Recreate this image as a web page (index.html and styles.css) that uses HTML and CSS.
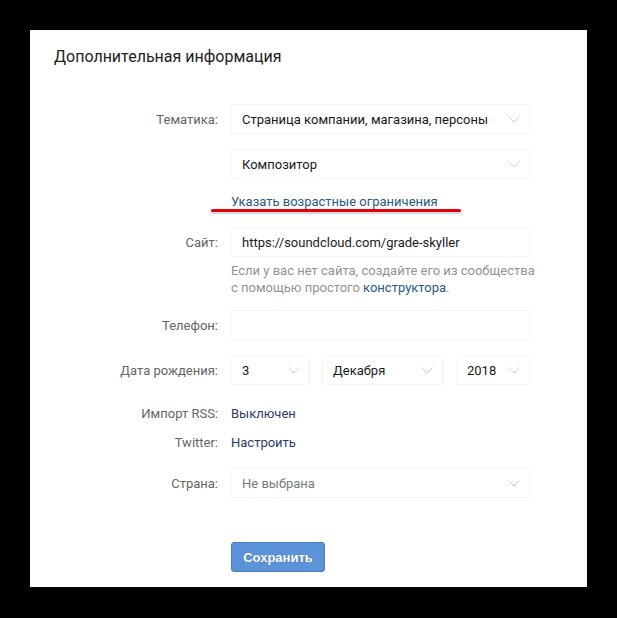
FILE: index.html
```html
<!DOCTYPE html>
<html lang="ru">
<head>
<meta charset="utf-8">
<link rel="stylesheet" href="styles.css">
</head>
<body>
<div class="panel">
  <h1 class="title">Дополнительная информация</h1>
  <div class="form">
    <div class="row r1">
      <div class="label">Тематика:</div>
      <div class="select wide"><span>Страница компании, магазина, персоны</span><svg class="chev" viewBox="0 0 12 7"><polyline points="0.5,0.5 6,6 11.5,0.5"/></svg></div>
    </div>
    <div class="row r2">
      <div class="label"></div>
      <div class="select wide"><span>Композитор</span><svg class="chev" viewBox="0 0 12 7"><polyline points="0.5,0.5 6,6 11.5,0.5"/></svg></div>
    </div>
    <div class="row r3">
      <div class="label"></div>
      <div class="linkwrap"><a class="link">Указать возрастные ограничения</a><span class="marker"></span></div>
    </div>
    <div class="row r4">
      <div class="label">Сайт:</div>
      <div class="input wide">https://soundcloud.com/grade-skyller</div>
    </div>
    <div class="row r5">
      <div class="label"></div>
      <div class="help">Если у вас нет сайта, создайте его из сообщества<br>с помощью простого <a class="dark">конструктора</a>.</div>
    </div>
    <div class="row r6">
      <div class="label">Телефон:</div>
      <div class="input wide"></div>
    </div>
    <div class="row r7">
      <div class="label">Дата рождения:</div>
      <div class="dates">
        <div class="select day"><span>3</span><svg class="chev" viewBox="0 0 12 7"><polyline points="0.5,0.5 6,6 11.5,0.5"/></svg></div>
        <div class="select month"><span>Декабря</span><svg class="chev" viewBox="0 0 12 7"><polyline points="0.5,0.5 6,6 11.5,0.5"/></svg></div>
        <div class="select year"><span>2018</span><svg class="chev" viewBox="0 0 12 7"><polyline points="0.5,0.5 6,6 11.5,0.5"/></svg></div>
      </div>
    </div>
    <div class="row r8 text">
      <div class="label">Импорт RSS:</div>
      <a class="value">Выключен</a>
    </div>
    <div class="row r9 text">
      <div class="label">Twitter:</div>
      <a class="value">Настроить</a>
    </div>
    <div class="row r10">
      <div class="label">Страна:</div>
      <div class="select wide placeholder"><span>Не выбрана</span><svg class="chev" viewBox="0 0 12 7"><polyline points="0.5,0.5 6,6 11.5,0.5"/></svg></div>
    </div>
    <div class="row r11">
      <div class="label"></div>
      <button class="btn">Сохранить</button>
    </div>
  </div>
</div>
</body>
</html>
```
FILE: styles.css
```css
html, body {
  margin: 0;
  padding: 0;
  background: #000;
}
body {
  font-family: Roboto, "Open Sans", Arial, sans-serif;
  font-size: 13px;
  color: #000;
}
.panel {
  margin: 30px 0 0 30px;
  width: 557px;
  height: 557px;
  background: #fff;
  box-sizing: border-box;
  padding-top: 17px;
}
.title {
  margin: 0;
  padding-left: 24px;
  font-size: 16px;
  line-height: 20px;
  font-weight: 400;
  color: #222;
}
.form {
  padding-top: 37px;
}
.row {
  display: flex;
  align-items: center;
}
.label {
  width: 188px;
  padding-right: 13px;
  text-align: right;
  color: #656565;
  flex-shrink: 0;
}
.select, .input {
  height: 30px;
  box-sizing: border-box;
  border: 1px solid #f6f6f7;
  border-radius: 2px;
  display: flex;
  align-items: center;
  justify-content: space-between;
  padding: 0 9px 0 10px;
  color: #1a1a1a;
}
.wide { width: 299px; }
.chev {
  width: 12px;
  height: 7px;
  fill: none;
  stroke: #cdd1d5;
  stroke-width: 1;
}
.r2 { margin-top: 15px; }
.r3 { margin-top: 14px; height: 18px; }
.linkwrap { position: relative; line-height: 18px; }
.link { color: #2a5885; }
.marker {
  position: absolute;
  left: -20px;
  top: 16px;
  width: 250px;
  height: 3px;
  border-radius: 2px;
  background: #e2000c;
  box-shadow: 0 2px 2px rgba(0,0,0,0.18);
}
.r4 { margin-top: 16px; }
.r5 { margin-top: 5px; align-items: flex-start; }
.help { color: #939393; line-height: 17px; }
.dark { color: #2a5885; }
.r6 { margin-top: 14px; }
.r7 { margin-top: 15px; }
.dates { display: flex; }
.day { width: 79px; }
.month { width: 121px; margin-left: 12px; }
.year { width: 74px; margin-left: 13px; }
.text { line-height: 18px; }
.r8 { margin-top: 20px; }
.r9 { margin-top: 11px; }
.value { color: #2a3a6a; }
.r10 { margin-top: 16px; }
.placeholder span { color: #7a7a7a; }
.r11 { margin-top: 44px; }
.btn {
  width: 94px;
  height: 30px;
  background: #5b92d8;
  border: 1px solid #4a7fc4;
  border-radius: 3px;
  color: #fff;
  font-family: "Liberation Sans", Arial, sans-serif;
  font-weight: 700;
  font-size: 13px;
  text-shadow: 0 0 1px rgba(0,0,0,0.25);
  padding: 0;
}
```
